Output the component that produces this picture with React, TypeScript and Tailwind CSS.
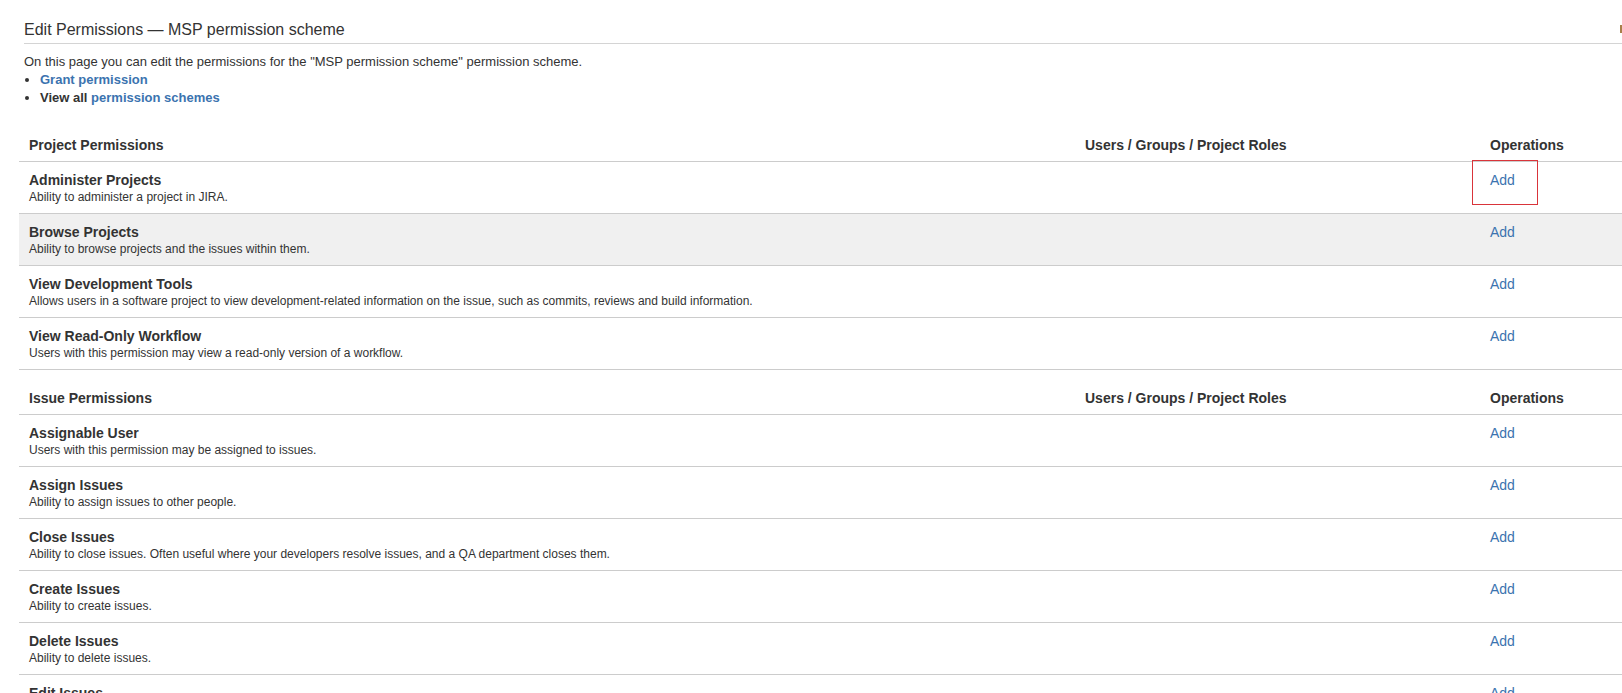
import React from 'react';

type Permission = {
  name: string;
  description: string;
  highlighted?: boolean;
  marked?: boolean;
};

const projectPermissions: Permission[] = [
  { name: 'Administer Projects', description: 'Ability to administer a project in JIRA.', marked: true },
  { name: 'Browse Projects', description: 'Ability to browse projects and the issues within them.', highlighted: true },
  {
    name: 'View Development Tools',
    description:
      'Allows users in a software project to view development-related information on the issue, such as commits, reviews and build information.',
  },
  { name: 'View Read-Only Workflow', description: 'Users with this permission may view a read-only version of a workflow.' },
];

const issuePermissions: Permission[] = [
  { name: 'Assignable User', description: 'Users with this permission may be assigned to issues.' },
  { name: 'Assign Issues', description: 'Ability to assign issues to other people.' },
  {
    name: 'Close Issues',
    description: 'Ability to close issues. Often useful where your developers resolve issues, and a QA department closes them.',
  },
  { name: 'Create Issues', description: 'Ability to create issues.' },
  { name: 'Delete Issues', description: 'Ability to delete issues.' },
  { name: 'Edit Issues', description: 'Ability to edit issues.' },
];

const HeaderRow = ({ title }: { title: string }) => (
  <div className="grid grid-cols-[1056px_405px_1fr] border-b border-[#cccccc] text-[14px] font-bold leading-[17px] text-[#333333]">
    <div className="pl-[10px] pt-[20px] pb-[7px]">{title}</div>
    <div className="pl-[10px] pt-[20px] pb-[7px]">Users / Groups / Project Roles</div>
    <div className="pl-[10px] pt-[20px] pb-[7px]">Operations</div>
  </div>
);

const PermissionRow = ({ item }: { item: Permission }) => (
  <div
    className={`grid grid-cols-[1056px_405px_1fr] border-b border-[#cccccc] ${
      item.highlighted ? 'bg-[#f0f0f0]' : 'bg-white'
    }`}
  >
    <div className="pl-[10px] pt-[8px] pb-[9px]">
      <div className="text-[14px] font-bold leading-[20px] text-[#333333]">{item.name}</div>
      <div className="text-[12px] leading-[14px] text-[#333333]">{item.description}</div>
    </div>
    <div />
    <div className="relative pl-[10px] pt-[8px] text-[14px] leading-[20px]">
      <a href="#" className="text-[#3b73af]">
        Add
      </a>
      {item.marked && (
        <div className="pointer-events-none absolute left-[-8px] top-[-2px] h-[45px] w-[66px] border border-[#d9343a]" />
      )}
    </div>
  </div>
);

export default function App() {
  return (
    <div
      className="h-screen overflow-hidden bg-white text-[#333333]"
      style={{ fontFamily: '"Liberation Sans", Arial, sans-serif' }}
    >
      {/* Page heading */}
      <div className="ml-[24px] flex items-start justify-between border-b border-[#d4d4d4] pt-[20px] pb-[3px]">
        <h2 className="text-[16px] font-normal leading-[20px] text-[#333333]">
          Edit Permissions — MSP permission scheme
        </h2>
        <span className="mt-[5px] h-[8px] w-[2px] bg-[#a8804a]" />
      </div>

      {/* Intro */}
      <div className="px-[24px] pt-[9px] text-[13px] leading-[18px]">
        <p>On this page you can edit the permissions for the "MSP permission scheme" permission scheme.</p>
        <ul className="list-disc pl-[16px] font-bold">
          <li>
            <a href="#" className="text-[#3b73af]">
              Grant permission
            </a>
          </li>
          <li>
            View all{' '}
            <a href="#" className="text-[#3b73af]">
              permission schemes
            </a>
          </li>
        </ul>
      </div>

      {/* Permissions table */}
      <div className="mt-[10px] pl-[19px]">
        <HeaderRow title="Project Permissions" />
        {projectPermissions.map((p) => (
          <PermissionRow key={p.name} item={p} />
        ))}
        <HeaderRow title="Issue Permissions" />
        {issuePermissions.map((p) => (
          <PermissionRow key={p.name} item={p} />
        ))}
      </div>
    </div>
  );
}
